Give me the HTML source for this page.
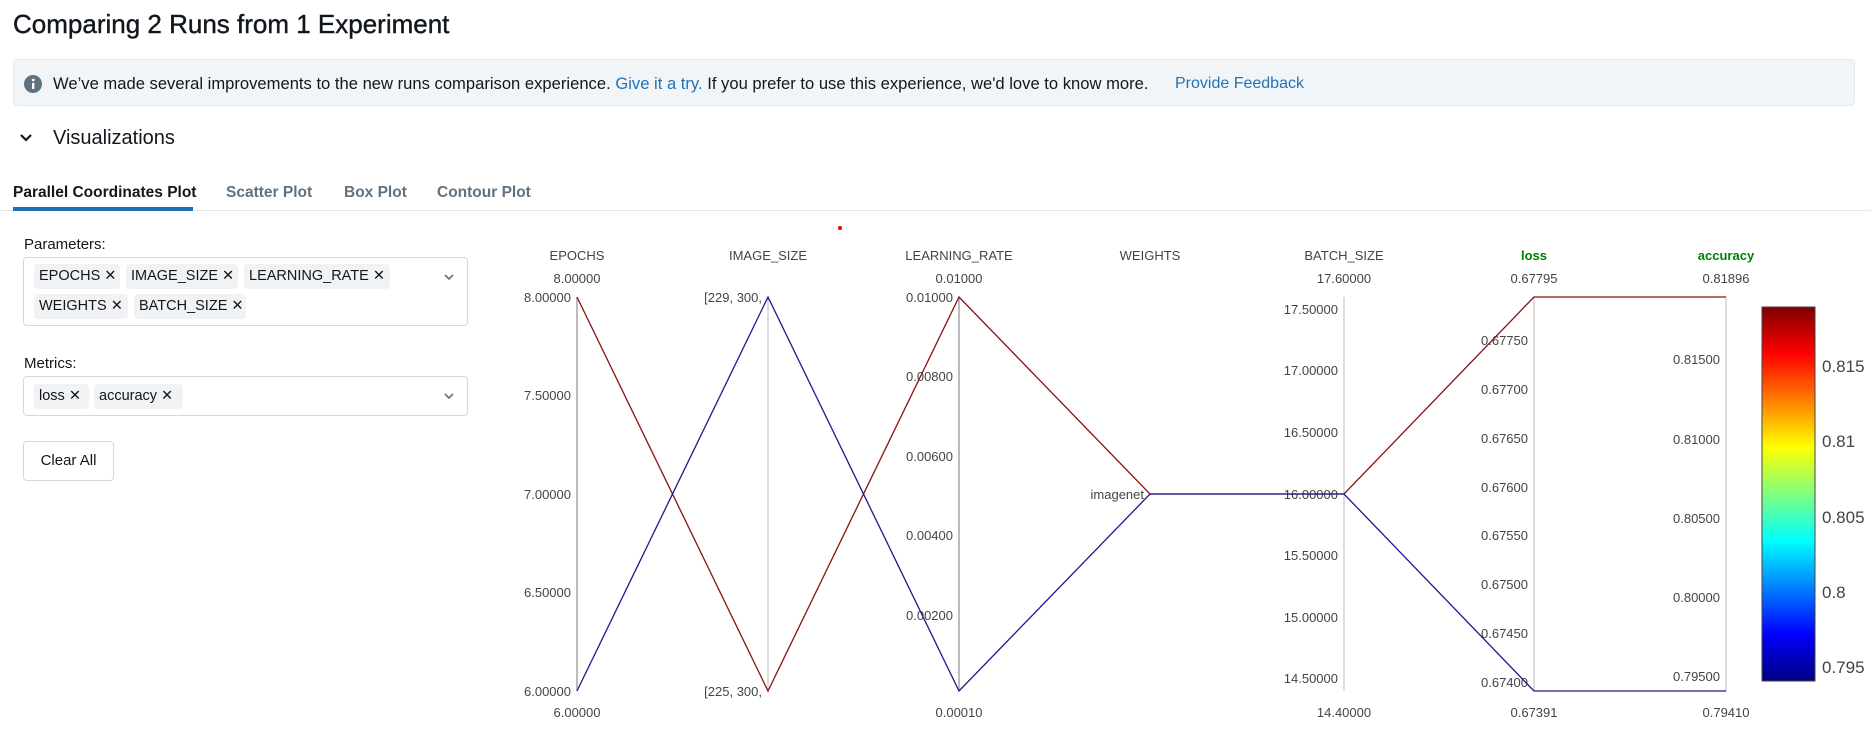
<!DOCTYPE html>
<html><head><meta charset="utf-8">
<style>
*{box-sizing:border-box;margin:0;padding:0}
body{width:1871px;height:748px;background:#fff;font-family:"Liberation Sans",sans-serif;color:#11171c;position:relative;overflow:hidden}
.abs{position:absolute;white-space:nowrap}
.chip{position:absolute;height:25px;background:#f0f2f4;border-radius:4px;font-size:14.5px;line-height:25px;padding-left:5px;color:#11171c;white-space:nowrap}
.box{position:absolute;border:1px solid #d1d9e1;border-radius:4px}
svg text{font-family:"Liberation Sans",sans-serif}
</style></head><body>
<div class="abs" style="left:13px;top:6px;font-size:26px;line-height:36px;-webkit-text-stroke:0.4px #11171c">Comparing 2 Runs from 1 Experiment</div>
<div class="abs" style="left:13px;top:59px;width:1842px;height:47px;background:#f2f5f7;border:1px solid #e6ebef;border-radius:4px"></div>
<svg class="abs" style="left:24px;top:75px" width="18" height="18"><circle cx="9" cy="9" r="9" fill="#5f7281"/><rect x="8" y="8" width="2.4" height="6" fill="#fff"/><circle cx="9.2" cy="5" r="1.4" fill="#fff"/></svg>
<div class="abs" style="left:53px;top:73px;font-size:16.6px;line-height:22px">We’ve made several improvements to the new runs comparison experience. <span style="color:#2272b4">Give it a try.</span> If you prefer to use this experience, we'd love to know more.</div>
<div class="abs" style="left:1175px;top:73px;font-size:16px;line-height:22px;color:#2272b4">Provide Feedback</div>
<svg class="abs" style="left:19px;top:132px" width="14" height="12"><path d="M2 3 L7 8 L12 3" stroke="#11171c" stroke-width="2.2" fill="none"/></svg>
<div class="abs" style="left:53px;top:125px;font-size:20px;line-height:26px">Visualizations</div>
<div class="abs" style="left:0;top:210px;width:1871px;height:1px;background:#e4e8ec"></div>
<div class="abs" style="left:13px;top:207px;width:180px;height:4px;background:#2272b4"></div>
<div class="abs" style="left:13px;top:182px;font-size:15.5px;line-height:22px;font-weight:600">Parallel Coordinates Plot</div>
<div class="abs" style="left:226px;top:182px;font-size:15.5px;line-height:22px;font-weight:600;color:#5f7281">Scatter Plot</div>
<div class="abs" style="left:344px;top:182px;font-size:15.5px;line-height:22px;font-weight:600;color:#5f7281">Box Plot</div>
<div class="abs" style="left:437px;top:182px;font-size:15.5px;line-height:22px;font-weight:600;color:#5f7281">Contour Plot</div>

<div class="abs" style="left:24px;top:235px;font-size:15px;line-height:20px">Parameters:</div>
<div class="box" style="left:23px;top:257px;width:445px;height:69px"></div>
<div class="chip" style="left:34px;top:264px;width:86px">EPOCHS ✕</div>
<div class="chip" style="left:126px;top:264px;width:112px">IMAGE_SIZE ✕</div>
<div class="chip" style="left:244px;top:264px;width:146px">LEARNING_RATE ✕</div>
<div class="chip" style="left:34px;top:294px;width:94px">WEIGHTS ✕</div>
<div class="chip" style="left:134px;top:294px;width:112px">BATCH_SIZE ✕</div>
<svg class="abs" style="left:443px;top:273px" width="12" height="9"><path d="M2 2 L6 6 L10 2" stroke="#5f7281" stroke-width="1.6" fill="none"/></svg>
<div class="abs" style="left:24px;top:354px;font-size:15px;line-height:20px">Metrics:</div>
<div class="box" style="left:23px;top:376px;width:445px;height:40px"></div>
<div class="chip" style="left:34px;top:384px;width:55px">loss ✕</div>
<div class="chip" style="left:94px;top:384px;width:89px">accuracy ✕</div>
<svg class="abs" style="left:443px;top:392px" width="12" height="9"><path d="M2 2 L6 6 L10 2" stroke="#5f7281" stroke-width="1.6" fill="none"/></svg>
<div class="box" style="left:23px;top:441px;width:91px;height:40px;font-size:15px;line-height:38px;text-align:center">Clear All</div>

<svg class="abs" style="left:0;top:0" width="1871" height="748">
<circle cx="840" cy="228" r="2" fill="#e00"/>
<g font-size="13" fill="#444" text-anchor="middle">
<text x="577" y="260">EPOCHS</text><text x="768" y="260">IMAGE_SIZE</text><text x="959" y="260">LEARNING_RATE</text><text x="1150" y="260">WEIGHTS</text><text x="1344" y="260">BATCH_SIZE</text>
<text x="1534" y="260" fill="#008000" font-weight="bold">loss</text><text x="1726" y="260" fill="#008000" font-weight="bold">accuracy</text>
<text x="577" y="283">8.00000</text><text x="959" y="283">0.01000</text><text x="1344" y="283">17.60000</text><text x="1534" y="283">0.67795</text><text x="1726" y="283">0.81896</text>
<text x="577" y="717">6.00000</text><text x="959" y="717">0.00010</text><text x="1344" y="717">14.40000</text><text x="1534" y="717">0.67391</text><text x="1726" y="717">0.79410</text>
</g>
<g stroke="#bbb" fill="none">
<line x1="577" y1="297" x2="577" y2="691" stroke-width="2"/><line x1="768" y1="297" x2="768" y2="691"/><line x1="959" y1="297" x2="959" y2="691" stroke-width="2"/>
<line x1="1344" y1="297" x2="1344" y2="691"/><line x1="1534" y1="297" x2="1534" y2="691"/><line x1="1726" y1="297" x2="1726" y2="691"/>
</g>
<g font-size="13" fill="#444" text-anchor="end">
<text x="571" y="302">8.00000</text><text x="571" y="400">7.50000</text><text x="571" y="499">7.00000</text><text x="571" y="597">6.50000</text><text x="571" y="696">6.00000</text>
<text x="762" y="302">[229, 300,</text><text x="762" y="696">[225, 300,</text>
<text x="953" y="302">0.01000</text><text x="953" y="381">0.00800</text><text x="953" y="461">0.00600</text><text x="953" y="540">0.00400</text><text x="953" y="620">0.00200</text>
<text x="1144" y="499">imagenet</text>
<text x="1338" y="314">17.50000</text><text x="1338" y="375">17.00000</text><text x="1338" y="437">16.50000</text><text x="1338" y="499">16.00000</text><text x="1338" y="560">15.50000</text><text x="1338" y="622">15.00000</text><text x="1338" y="683">14.50000</text>
<text x="1528" y="345">0.67750</text><text x="1528" y="394">0.67700</text><text x="1528" y="443">0.67650</text><text x="1528" y="492">0.67600</text><text x="1528" y="540">0.67550</text><text x="1528" y="589">0.67500</text><text x="1528" y="638">0.67450</text><text x="1528" y="687">0.67400</text>
<text x="1720" y="364">0.81500</text><text x="1720" y="444">0.81000</text><text x="1720" y="523">0.80500</text><text x="1720" y="602">0.80000</text><text x="1720" y="681">0.79500</text>
</g>
<polyline points="577,297 768,691 959,297 1150,494 1344,494 1534,297 1726,297" stroke="#8b1010" stroke-width="1.3" fill="none"/>
<polyline points="577,691 768,297 959,691 1150,494 1344,494 1534,691 1726,691" stroke="#1a1a90" stroke-width="1.3" fill="none"/>
<defs><linearGradient id="jet" x1="0" y1="1" x2="0" y2="0">
<stop offset="0" stop-color="#000080"/><stop offset="0.125" stop-color="#0000ff"/><stop offset="0.375" stop-color="#00ffff"/><stop offset="0.625" stop-color="#ffff00"/><stop offset="0.875" stop-color="#ff0000"/><stop offset="1" stop-color="#800000"/></linearGradient></defs>
<rect x="1762" y="307" width="53" height="374" fill="url(#jet)" stroke="#444" stroke-width="1"/>
<g font-size="17" fill="#444"><text x="1822" y="372">0.815</text><text x="1822" y="447">0.81</text><text x="1822" y="523">0.805</text><text x="1822" y="598">0.8</text><text x="1822" y="673">0.795</text></g>
</svg>
</body></html>
